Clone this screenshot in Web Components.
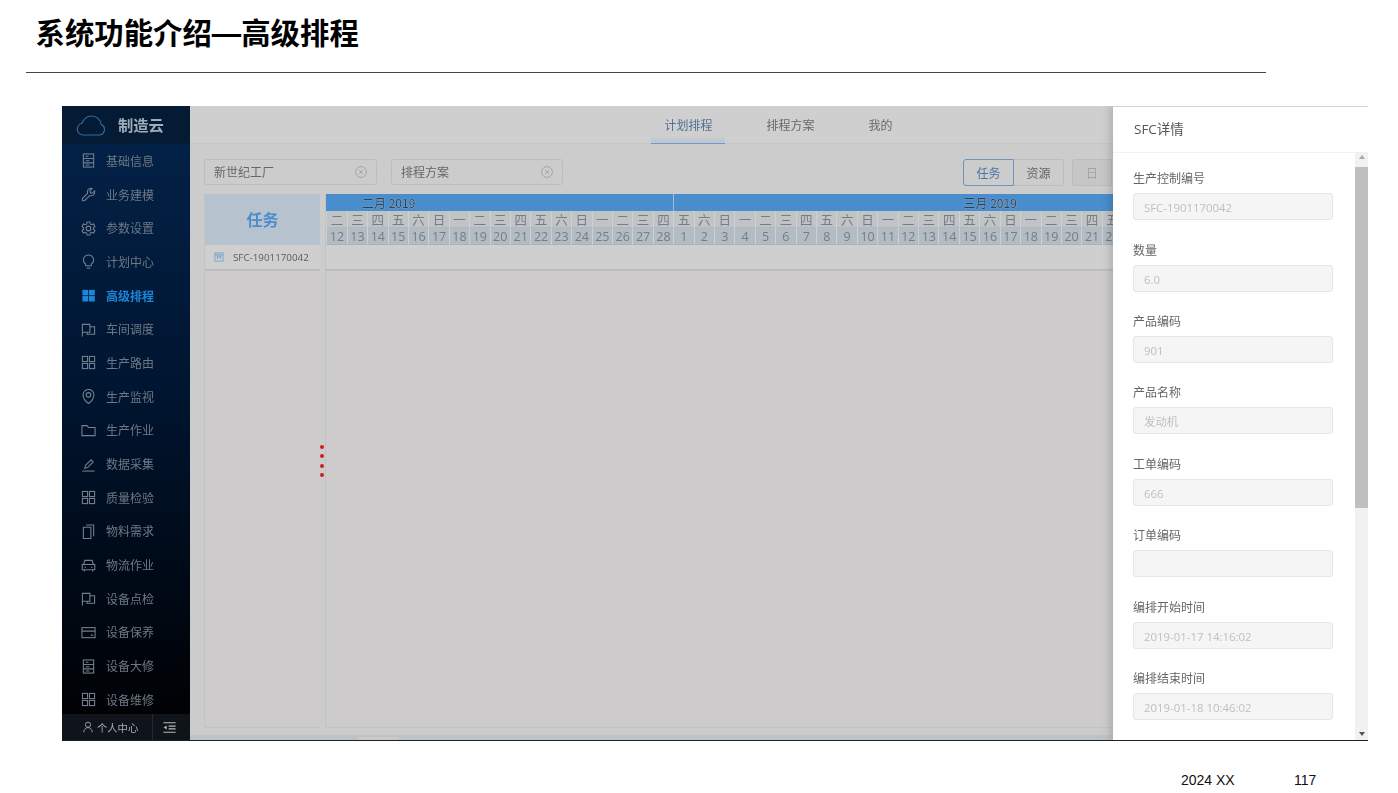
<!DOCTYPE html>
<html lang="zh">
<head>
<meta charset="utf-8">
<title>系统功能介绍</title>
<style>
  html, body { margin: 0; background: #fff; }
  body { width: 1398px; height: 793px; overflow: hidden; font-family: "Open Sans", "Noto Sans CJK SC", sans-serif; }
</style>
</head>
<body>
<slide-page>
  <slide-head slot="head">系统功能介绍—高级排程</slide-head>
  <app-window slot="app"></app-window>
  <slide-foot slot="foot"></slide-foot>
</slide-page>

<script>
const ICONS = {
  form: '<rect x="2.500" y="1" width="11" height="14"/><path d="M2.500 5.800h11M2.500 10.500h11M5 3.500h3M5 8.200h4M5 12.800h4"/>',
  wrench: '<path d="M10.800 1.300a4 4 0 0 0-3.800 5.400L1.500 12.300l.1 2.200 2.200.1 5.500-5.500a4 4 0 0 0 5.400-3.800c0-.4-.1-.8-.2-1.100l-2.400 2.400-2.100-.5-.5-2.100 2.400-2.400c-.4-.2-.7-.3-1.100-.3z"/>',
  gear: '<path d="M6.500 1h3l.4 2.200 1.400.8 2.100-.8 1.500 2.600-1.700 1.400v1.600l1.700 1.400-1.500 2.600-2.100-.8-1.400.8-.4 2.200h-3l-.4-2.200-1.400-.8-2.100.8-1.500-2.600 1.700-1.400V7.200L1.100 5.800l1.500-2.600 2.100.8 1.400-.8z"/><circle cx="8" cy="8" r="2.500"/>',
  bulb: '<path d="M8 1a5.300 5.300 0 0 0-3 9.700V12.500h6v-1.800A5.300 5.300 0 0 0 8 1z"/><path d="M6 15h4"/>',
  tiles: '<g fill="currentColor" stroke="none"><rect x="1.500" y="2" width="6.200" height="5.800"/><rect x="8.500" y="2" width="6.200" height="5.800"/><rect x="1.500" y="8.600" width="6.200" height="5.800"/><rect x="8.500" y="8.600" width="6.200" height="5.800"/></g>',
  flag: '<path d="M1.500 15.500V2.500h8V11h-8"/><path d="M9.500 5h5v8H6.500v-2"/>',
  grid: '<rect x="1.500" y="1.500" width="5.500" height="5.500"/><rect x="9" y="1.500" width="5.500" height="5.500"/><rect x="1.500" y="9" width="5.500" height="5.500"/><rect x="9" y="9" width="5.500" height="5.500"/>',
  pin: '<path d="M8 15.500s5.800-4.500 5.800-9.200a5.800 5.800 0 0 0-11.600 0C2.200 11 8 15.500 8 15.500z"/><circle cx="8" cy="6.300" r="2.400"/>',
  folder: '<path d="M1 2.800h5.500l1.500 2h7v8.700H1z"/>',
  pen: '<path d="M1.500 15h13"/><path d="M4 12l.7-3 6-6 2.300 2.300-6 6z"/>',
  copy: '<path d="M5.500 1h8v12"/><path d="M2.500 3.500h8V15.500h-8z"/>',
  car: '<path d="M2.800 7L4 2.500h8L13.200 7"/><path d="M1.300 7h13.400v5.500H1.300z"/><path d="M3.500 12.500v2M12.500 12.500v2M3.800 9.800h1.500M10.700 9.800h1.500"/>',
  card: '<rect x="1" y="2.800" width="14" height="10.700"/><path d="M1 6.500h14M10.500 10.800h2.500"/>',
  user: '<circle cx="8" cy="5" r="3.500"/><path d="M2.200 15c.5-4 3.200-6.200 5.800-6.200s5.300 2.200 5.800 6.200"/>',
  outdent: '<path d="M1.500 3h13M7 6.500h7.500M7 9.500h7.500M1.500 13h13"/><path fill="currentColor" stroke="none" d="M5 5.800v4.400L1.800 8z"/>',
  cal: '<rect x="1.500" y="1.500" width="13" height="13"/><path d="M1.500 4.500h13M5.500 4.500v6.500M10.500 4.500v6.500M5.500 8h5"/>'
};

function icon(name, size) {
  return `<svg width="${size}" height="${size}" viewBox="0 0 16 16" fill="none" stroke="currentColor" stroke-width="1.150">${ICONS[name]}</svg>`;
}

class SlidePage extends HTMLElement {
  constructor() {
    super();
    this.attachShadow({ mode: 'open' });
    this.shadowRoot.innerHTML = `
      <style>
        :host { display: flex; flex-direction: column; width: 1398px; height: 793px; }
        .app { display: block; margin: 33px 0 0 62px; }
      </style>
      <slot name="head"></slot>
      <div class="app"><slot name="app"></slot></div>
      <slot name="foot"></slot>
    `;
  }
}

class SlideHead extends HTMLElement {
  constructor() {
    super();
    this.attachShadow({ mode: 'open' });
    this.shadowRoot.innerHTML = `
      <style>
        :host { display: block; height: 73px; margin-left: 26px; width: 1240px; box-sizing: border-box; border-bottom: 1px solid #444; }
        h1 {
          margin: 0;
          padding: 13px 0 0 9.500px;
          font: 700 29.400px/42px "Liberation Sans", "Noto Sans CJK SC", sans-serif;
          color: #000;
          white-space: nowrap;
        }
      </style>
      <h1><slot></slot></h1>
    `;
  }
}

class SlideFoot extends HTMLElement {
  constructor() {
    super();
    this.attachShadow({ mode: 'open' });
    this.shadowRoot.innerHTML = `
      <style>
        :host { display: flex; padding: 30px 0 0 1181px; font: 14px/18px "Liberation Sans", sans-serif; color: #111; }
        span:first-of-type { width: 113px; }
      </style>
      <span>2024 XX</span><span>117</span>
    `;
  }
}

class AppWindow extends HTMLElement {
  constructor() {
    super();
    this.attachShadow({ mode: 'open' });
    this.shadowRoot.innerHTML = `
      <style>
        :host {
          display: flex;
          position: relative;
          width: 1306px;
          height: 634px;
          overflow: hidden;
          border-bottom: 1px solid #18222e;
          filter: blur(0.35px);
        }
        main-area { flex: 1; min-width: 0; }
      </style>
      <side-nav></side-nav>
      <main-area></main-area>
      <sfc-drawer></sfc-drawer>
    `;
  }
}

class SideNav extends HTMLElement {
  constructor() {
    super();
    this.attachShadow({ mode: 'open' });
    const items = [
      ['form', '基础信息'], ['wrench', '业务建模'], ['gear', '参数设置'], ['bulb', '计划中心'],
      ['tiles', '高级排程', true], ['flag', '车间调度'], ['grid', '生产路由'], ['pin', '生产监视'],
      ['folder', '生产作业'], ['pen', '数据采集'], ['grid', '质量检验'], ['copy', '物料需求'],
      ['car', '物流作业'], ['flag', '设备点检'], ['card', '设备保养'], ['form', '设备大修'], ['grid', '设备维修']
    ];
    const rows = items.map(([ic, label, on]) =>
      `<div class="item${on ? ' on' : ''}">${icon(ic, 15)}<span>${label}</span></div>`).join('');
    this.shadowRoot.innerHTML = `
      <style>
        :host {
          display: flex;
          flex-direction: column;
          flex: none;
          width: 128px;
          height: 634px;
          background: linear-gradient(#03234a, #001530 45%, #000 100%);
          color: #6d7885;
          font: 12px "Noto Sans CJK SC", sans-serif;
        }
        .logo { flex: none; height: 38px; display: flex; align-items: center; background: #051a33; }
        .logo svg { margin-left: 13px; }
        .logo b { margin: -3px 0 0 12px; font-size: 15.300px; color: #9fadbc; }
        nav { flex: 1; min-height: 0; overflow: hidden; }
        .item { height: 33.690px; display: flex; align-items: center; padding-left: 18.500px; }
        .item span { margin-left: 10.500px; margin-top: -1px; }
        .item svg { flex: none; color: #74808d; }
        .on, .on svg { color: #1b86d9; font-weight: 700; }
        .foot { flex: none; height: 26px; display: flex; align-items: center; background: #0e1419; color: #a9afb5; font-size: 10.300px; }
        .me { width: 91px; height: 100%; display: flex; align-items: center; padding-left: 20px; gap: 3px; box-sizing: border-box; border-right: 1px solid #252a2f; }
        .fold { margin-left: 9px; display: flex; color: #b5babf; }
      </style>
      <div class="logo">
        <svg width="31" height="21" viewBox="0 0 31 21" fill="none" stroke="#2f6ca5" stroke-width="1.150">
          <path d="M8 20a6 6 0 0 1-1.200-11.800C9 3.500 12.800 1 16.500 1c5.500 0 9.200 4 9.700 8.500A5.500 5.500 0 0 1 23.500 20z"/>
        </svg>
        <b>制造云</b>
      </div>
      <nav>${rows}</nav>
      <div class="foot">
        <div class="me">${icon('user', 12)}<span>个人中心</span></div>
        <div class="fold">${icon('outdent', 15)}</div>
      </div>
    `;
  }
}

class MainArea extends HTMLElement {
  constructor() {
    super();
    this.attachShadow({ mode: 'open' });
    this.shadowRoot.innerHTML = `
      <style>
        :host { display: flex; flex-direction: column; height: 634px; background: #cdcccc; font: 12px "Noto Sans CJK SC", sans-serif; color: #6f6f6f; }
        .tools { flex: none; display: flex; align-items: flex-start; gap: 14px; padding: 15px 14px 9px; height: 26px; overflow: hidden; }
        .tools select-box:nth-child(1) { width: 173px; }
        .tools select-box:nth-child(2) { width: 172px; }
        .tools toggle-group { margin-left: 386px; }
        gantt-chart { flex: 1; min-height: 0; }
        .bottom { flex: none; height: 12px; background: linear-gradient(#cbcbcb 0 7px, #bfc2c4 7px); position: relative; }
        .bottom i { position: absolute; left: 167px; width: 42px; top: 9px; height: 3px; background: #c9c9c9; }
      </style>
      <top-tabs></top-tabs>
      <div class="tools">
        <select-box>新世纪工厂</select-box>
        <select-box>排程方案</select-box>
        <toggle-group></toggle-group>
      </div>
      <gantt-chart></gantt-chart>
      <div class="bottom"><i></i></div>
    `;
  }
}

class TopTabs extends HTMLElement {
  constructor() {
    super();
    this.attachShadow({ mode: 'open' });
    this.shadowRoot.innerHTML = `
      <style>
        :host { display: flex; flex: none; justify-content: center; gap: 28px; height: 38px; box-sizing: border-box; padding-right: 1px; background: #cfcfcf; border-bottom: 1px solid #c6c6c6; }
        span { padding: 0 13px; line-height: 38px; height: 38px; box-sizing: border-box; color: #686868; }
        .on { color: #4f7197; background: linear-gradient(transparent 30px, rgba(90,140,205,.16)); border-bottom: 1px solid #6d9ad2; }
      </style>
      <span class="on">计划排程</span><span>排程方案</span><span>我的</span>
    `;
  }
}

class SelectBox extends HTMLElement {
  constructor() {
    super();
    this.attachShadow({ mode: 'open' });
    this.shadowRoot.innerHTML = `
      <style>
        :host { display: flex; align-items: center; justify-content: space-between; height: 26px; box-sizing: border-box; padding: 0 9px; border: 1px solid #bdbdbd; border-radius: 3px; color: #666; }
        span { margin-top: -1px; }
        svg { flex: none; }
      </style>
      <span><slot></slot></span>
      <svg width="12" height="12" viewBox="0 0 12 12" fill="none" stroke="#a5a5a5" stroke-width="1">
        <circle cx="6" cy="6" r="5.400"/><path d="M4 4l4 4M8 4l-4 4"/>
      </svg>
    `;
  }
}

class ToggleGroup extends HTMLElement {
  constructor() {
    super();
    this.attachShadow({ mode: 'open' });
    this.shadowRoot.innerHTML = `
      <style>
        :host { display: flex; height: 27px; box-sizing: border-box; }
        span { display: flex; align-items: center; justify-content: center; box-sizing: border-box; height: 27px; border: 1px solid #bdbdbd; color: #666; }
        .a { width: 51px; color: #4a76a8; border-color: #6e94bd; border-radius: 3px 0 0 3px; }
        .b { width: 50px; border-left: 0; border-radius: 0 3px 3px 0; }
        .c { width: 40px; margin-left: 8px; background: #c6c6c6; color: #a3a3a3; border-radius: 3px 0 0 3px; }
      </style>
      <span class="a">任务</span><span class="b">资源</span><span class="c">日</span>
    `;
  }
}

class GanttChart extends HTMLElement {
  constructor() {
    super();
    this.attachShadow({ mode: 'open' });
    const weekdays = ['日', '一', '二', '三', '四', '五', '六'];
    const days = [];
    for (let d = 12; d <= 28; d++) days.push([d, (d + 2 - 12 + 7) % 7]);
    for (let d = 1; d <= 22; d++) days.push([d, (d + 4) % 7]);
    const wk = days.map(x => `<i>${weekdays[x[1]]}</i>`).join('');
    const dt = days.map(x => `<i>${x[0]}</i>`).join('');
    this.shadowRoot.innerHTML = `
      <style>
        :host { display: flex; padding: 0 0 0 14px; overflow: hidden; }
        .left { flex: none; width: 116px; display: flex; flex-direction: column; background: #cdcbcc; border-left: 1px solid #c3c3c3; box-sizing: border-box; border-bottom: 1px solid #c3c3c3; }
        .left h3 { margin: 0; flex: none; height: 49px; padding-bottom: 2px; display: flex; align-items: center; justify-content: center; background: #b6c3ce; color: #4b8ccb; font-size: 16px; font-weight: 700; }
        .task { flex: none; height: 24px; display: flex; align-items: center; padding-left: 9px; gap: 9px; background: #cfcfcf; color: #5c5c5c; font: 9.800px "Open Sans", sans-serif; border-bottom: 2px solid #bdbdbd; }
        .task svg { color: #5c94cf; flex: none; }
        .split { flex: none; width: 6px; box-sizing: border-box; display: flex; flex-direction: column; align-items: flex-start; justify-content: center; gap: 5.300px; }
        .split b { width: 4px; height: 4px; border-radius: 2px; background: #c8201c; }
        .right { flex: 1; min-width: 0; overflow: hidden; background: #cdcbcc; border-left: 1px solid #c3c3c3; margin-left: -1px; border-bottom: 1px solid #c3c3c3; }
        .months { display: flex; height: 17px; background: #4a8dcc; color: #333f4b; line-height: 17px; text-shadow: 0 0 1px rgba(255,255,255,.8); white-space: nowrap; }
        .months div { box-sizing: border-box; }
        .feb { width: 347.500px; padding-left: 36px; border-right: 1px solid #9cc0e2; }
        .mar { padding-left: 290px; }
        .cells { display: grid; grid-template-columns: repeat(39, 20.410px); height: 17px; width: 800px; margin-left: 1.300px; }
        .cells i { font-style: normal; text-align: center; line-height: 17px; color: #767d83; box-sizing: border-box; border-right: 1px solid #d0d0d0; white-space: nowrap; overflow: hidden; }
        .wk i { background: #c1c4c6; border-bottom: 1px solid #b5b8bb; font-size: 12.500px; }
        .dt i { background: #b3bcc3; border-bottom: 1px solid #adb2b6; font-family: "Open Sans", sans-serif; font-size: 12.500px; }
        .rowline { height: 24px; background: #cfcfcf; border-bottom: 2px solid #bdbdbd; }
      </style>
      <div class="left">
        <h3>任务</h3>
        <div class="task">${icon('cal', 10)}<span>SFC-1901170042</span></div>
      </div>
      <div class="split"><b></b><b></b><b></b><b></b></div>
      <div class="right">
        <div class="months"><div class="feb">二月 2019</div><div class="mar">三月 2019</div></div>
        <div class="cells wk">${wk}</div>
        <div class="cells dt">${dt}</div>
        <div class="rowline"></div>
      </div>
    `;
  }
}

class FormField extends HTMLElement {
  constructor() {
    super();
    this.attachShadow({ mode: 'open' });
    this.shadowRoot.innerHTML = `
      <style>
        :host { display: block; height: 71.400px; }
        label { display: block; height: 22px; line-height: 22px; color: #666; font-size: 12px; margin-bottom: 3px; }
        div { width: 200px; height: 27px; box-sizing: border-box; padding-left: 10px; line-height: 27px; background: #f5f5f5; border: 1px solid #e6e6e6; border-radius: 3px; color: #bfbfbf; font-size: 11.400px; white-space: nowrap; }
      </style>
      <label>${this.getAttribute('label')}</label>
      <div><slot></slot></div>
    `;
  }
}

class SfcDrawer extends HTMLElement {
  constructor() {
    super();
    this.attachShadow({ mode: 'open' });
    this.shadowRoot.innerHTML = `
      <style>
        :host {
          position: absolute;
          top: 0;
          right: 0;
          width: 255px;
          height: 634px;
          display: flex;
          flex-direction: column;
          background: #fff;
          box-shadow: -3px 0 8px rgba(0,0,0,.16);
          border-top: 1px solid #d4d4d4;
          box-sizing: border-box;
          font: 12px "Open Sans", "Noto Sans CJK SC", sans-serif;
        }
        header { flex: none; height: 45px; line-height: 45px; padding-left: 21px; font-size: 13.500px; color: #555; border-bottom: 1px solid #f2f2f2; }
        .body { flex: 1; min-height: 0; display: flex; }
        .fields { flex: 1; padding: 15.300px 0 0 20px; overflow: hidden; }
        .bar { flex: none; width: 13px; background: #f1f1f1; display: flex; flex-direction: column; align-items: center; position: relative; }
        .bar u { position: absolute; left: 4px; width: 0; height: 0; border: 3px solid transparent; }
        .bar .up { top: 2px; border-bottom: 4px solid #a8a8a8; border-top: 0; }
        .bar .down { bottom: 4px; border-top: 4px solid #555; border-bottom: 0; }
        .bar b { margin-top: 14px; width: 13px; height: 341px; background: #bfbfbf; }
      </style>
      <header>SFC详情</header>
      <div class="body">
        <div class="fields">
          <form-field label="生产控制编号">SFC-1901170042</form-field>
          <form-field label="数量">6.0</form-field>
          <form-field label="产品编码">901</form-field>
          <form-field label="产品名称">发动机</form-field>
          <form-field label="工单编码">666</form-field>
          <form-field label="订单编码"></form-field>
          <form-field label="编排开始时间">2019-01-17 14:16:02</form-field>
          <form-field label="编排结束时间">2019-01-18 10:46:02</form-field>
        </div>
        <div class="bar"><u class="up"></u><b></b><u class="down"></u></div>
      </div>
    `;
  }
}

customElements.define('slide-page', SlidePage);
customElements.define('slide-head', SlideHead);
customElements.define('slide-foot', SlideFoot);
customElements.define('app-window', AppWindow);
customElements.define('side-nav', SideNav);
customElements.define('main-area', MainArea);
customElements.define('top-tabs', TopTabs);
customElements.define('select-box', SelectBox);
customElements.define('toggle-group', ToggleGroup);
customElements.define('gantt-chart', GanttChart);
customElements.define('form-field', FormField);
customElements.define('sfc-drawer', SfcDrawer);
</script>
</body>
</html>
